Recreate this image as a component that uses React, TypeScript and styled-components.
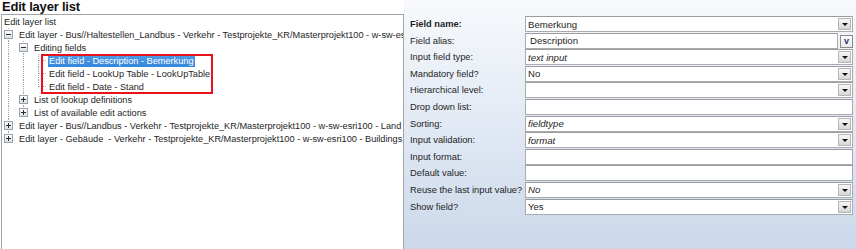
import React from "react";
import styled, { createGlobalStyle } from "styled-components";

const GlobalStyle = createGlobalStyle`
  html, body {
    margin: 0;
    padding: 0;
    background: #ffffff;
  }
  body {
    width: 856px;
    height: 249px;
    overflow: hidden;
    font-family: "Liberation Sans", Arial, sans-serif;
    color: #1e1e1e;
  }
`;

type Guide = "full" | "top" | "none";
type Expander = "plus" | "minus" | null;

type CellSpec = {
  line: Guide;
  tick?: boolean;
  expander?: Expander;
};

type TreeNode = {
  text: string;
  cells: CellSpec[];
  selected?: boolean;
};

const head: TreeNode[] = [
  { text: "Edit layer list", cells: [] },
  {
    text: "Edit layer - Bus//Haltestellen_Landbus - Verkehr - Testprojekte_KR/Masterprojekt100 - w-sw-esri100 - Haltestellen",
    cells: [{ line: "full", expander: "minus" }],
  },
  {
    text: "Editing fields",
    cells: [{ line: "full" }, { line: "full", expander: "minus" }],
  },
];

const marked: TreeNode[] = [
  {
    text: "Edit field - Description - Bemerkung",
    cells: [{ line: "full" }, { line: "full" }, { line: "full", tick: true }],
    selected: true,
  },
  {
    text: "Edit field - LookUp Table - LookUpTable",
    cells: [{ line: "full" }, { line: "full" }, { line: "full", tick: true }],
  },
  {
    text: "Edit field - Date - Stand",
    cells: [{ line: "full" }, { line: "full" }, { line: "top", tick: true }],
  },
];

const tail: TreeNode[] = [
  {
    text: "List of lookup definitions",
    cells: [{ line: "full" }, { line: "full", expander: "plus" }],
  },
  {
    text: "List of available edit actions",
    cells: [{ line: "full" }, { line: "top", expander: "plus" }],
  },
  {
    text: "Edit layer - Bus//Landbus - Verkehr - Testprojekte_KR/Masterprojekt100 - w-sw-esri100 - Land bus",
    cells: [{ line: "full", expander: "plus" }],
  },
  {
    text: "Edit layer - Gebäude  - Verkehr - Testprojekte_KR/Masterprojekt100 - w-sw-esri100 - Buildings",
    cells: [{ line: "top", expander: "plus" }],
  },
];

type Field = {
  label: string;
  value?: string;
  bold?: boolean;
  italic?: boolean;
  kind: "combo" | "alias" | "text";
};

const fields: Field[] = [
  { label: "Field name:", value: "Bemerkung", bold: true, kind: "combo" },
  { label: "Field alias:", value: "Description", kind: "alias" },
  { label: "Input field type:", value: "text input", italic: true, kind: "combo" },
  { label: "Mandatory field?", value: "No", kind: "combo" },
  { label: "Hierarchical level:", kind: "combo" },
  { label: "Drop down list:", kind: "text" },
  { label: "Sorting:", value: "fieldtype", italic: true, kind: "combo" },
  { label: "Input validation:", value: "format", italic: true, kind: "combo" },
  { label: "Input format:", kind: "text" },
  { label: "Default value:", kind: "text" },
  { label: "Reuse the last input value?", value: "No", italic: true, kind: "combo" },
  { label: "Show field?", value: "Yes", kind: "combo" },
];

const Page = styled.div`
  display: grid;
  grid-template-columns: 404px 452px;
  height: 249px;
`;

const LeftColumn = styled.div`
  display: flex;
  flex-direction: column;
  min-width: 0;
`;

const Title = styled.h1`
  margin: 0;
  height: 14px;
  padding-left: 2px;
  font-size: 13px;
  line-height: 14px;
  font-weight: bold;
  letter-spacing: -0.2px;
  color: #111;
`;

const TreeBox = styled.div`
  flex: 1;
  margin-left: 1px;
  border: 1px solid #a3a3a3;
  border-bottom: none;
  background: #fff;
  padding: 0 0 0 1px;
  overflow: hidden;
`;

const Row = styled.div`
  display: flex;
  align-items: center;
  height: 13px;
  white-space: pre;
`;

const Cell = styled.div<{ $line: Guide; $tick?: boolean }>`
  flex: none;
  width: 15px;
  height: 13px;
  display: flex;
  align-items: center;
  background-repeat: no-repeat;
  background-image: ${({ $line, $tick }) =>
    [
      $line !== "none"
        ? "repeating-linear-gradient(to bottom, #a5a5a5 0 1px, transparent 1px 2px)"
        : null,
      $tick
        ? "repeating-linear-gradient(to right, #a5a5a5 0 1px, transparent 1px 2px)"
        : null,
    ]
      .filter(Boolean)
      .join(", ") || "none"};
  background-size: ${({ $line, $tick }) =>
    [
      $line !== "none" ? `1px ${$line === "top" ? "7px" : "13px"}` : null,
      $tick ? "8px 1px" : null,
    ]
      .filter(Boolean)
      .join(", ") || "auto"};
  background-position: ${({ $line, $tick }) =>
    [$line !== "none" ? "5px 0" : null, $tick ? "6px 6px" : null]
      .filter(Boolean)
      .join(", ") || "0 0"};
`;

const ExpanderBox = styled.span`
  box-sizing: border-box;
  width: 9px;
  height: 9px;
  margin-left: 1px;
  border: 1px solid #97a2ad;
  background: linear-gradient(#ffffff, #dcdfe3);
  display: flex;
  align-items: center;
  justify-content: center;
  position: relative;
  &::before {
    content: "";
    width: 5px;
    height: 1px;
    background: #2b2b2b;
  }
`;

const PlusBar = styled.span`
  position: absolute;
  left: 3px;
  top: 1px;
  width: 1px;
  height: 5px;
  background: #2b2b2b;
`;

const Label = styled.span<{ $selected?: boolean }>`
  flex: none;
  font-size: 9.2px;
  line-height: 12px;
  height: 12px;
  padding: 0 1px;
  color: ${({ $selected }) => ($selected ? "#fff" : "#1e1e1e")};
  background: ${({ $selected }) =>
    $selected ? "linear-gradient(#4d9be9, #3585dc)" : "transparent"};
`;

const Marked = styled.div`
  position: relative;
  &::after {
    content: "";
    position: absolute;
    left: 38px;
    top: 0;
    width: 172px;
    height: 40px;
    box-sizing: border-box;
    border: 2px solid #e8121a;
    pointer-events: none;
  }
`;

const Settings = styled.div`
  padding: 16px 3px 0 6px;
  background: linear-gradient(to bottom, #f7f9fc 0%, #e4ebf5 45%, #cbd8ea 100%);
  display: grid;
  grid-template-columns: 115px 328px;
  grid-auto-rows: 16.6px;
  align-content: start;
`;

const FieldLabel = styled.div<{ $bold?: boolean }>`
  font-size: 9.3px;
  font-weight: ${({ $bold }) => ($bold ? "bold" : "normal")};
  line-height: 16px;
  height: 16px;
  white-space: nowrap;
  color: #1e1e1e;
`;

const InputRow = styled.div`
  display: flex;
  align-items: stretch;
  gap: 2px;
  height: 16px;
`;

const Input = styled.div<{ $italic?: boolean; $inset?: number }>`
  flex: 1;
  box-sizing: border-box;
  display: flex;
  align-items: center;
  border: 1px solid #a9abaf;
  border-top-color: #9a9ca0;
  background: #fff;
  padding-left: ${({ $inset }) => $inset ?? 2}px;
  font-size: 9.6px;
  font-style: ${({ $italic }) => ($italic ? "italic" : "normal")};
  color: #1e1e1e;
  white-space: nowrap;
  overflow: hidden;
`;

const Value = styled.span`
  flex: 1;
`;

const DropButton = styled.span`
  flex: none;
  box-sizing: border-box;
  width: 13px;
  height: 12px;
  margin: 1px;
  border: 1px solid #b6b6b6;
  background: linear-gradient(#f7f7f7, #d6d6d6);
  display: flex;
  align-items: center;
  justify-content: center;
  &::before {
    content: "";
    border-left: 3px solid transparent;
    border-right: 3px solid transparent;
    border-top: 3px solid #111;
    margin-top: 1px;
  }
`;

const AliasButton = styled.span`
  flex: none;
  box-sizing: border-box;
  width: 13px;
  height: 13px;
  margin-top: 2px;
  border: 1px solid #8a8a8a;
  background: linear-gradient(#ffffff, #e9e9e9);
  display: flex;
  align-items: center;
  justify-content: center;
  font-size: 9px;
  font-weight: bold;
  line-height: 9px;
  color: #1d2f6b;
`;

const TreeLine = ({ node }: { node: TreeNode }) => (
  <Row>
    {node.cells.map((c, i) => (
      <Cell key={i} $line={c.line} $tick={c.tick}>
        {c.expander && (
          <ExpanderBox>{c.expander === "plus" && <PlusBar />}</ExpanderBox>
        )}
      </Cell>
    ))}
    <Label $selected={node.selected}>{node.text}</Label>
  </Row>
);

const FieldRow = ({ field }: { field: Field }) => (
  <>
    <FieldLabel $bold={field.bold}>{field.label}</FieldLabel>
    <InputRow>
      <Input $italic={field.italic} $inset={field.kind === "alias" ? 4 : 2}>
        <Value>{field.value}</Value>
        {field.kind === "combo" && <DropButton />}
      </Input>
      {field.kind === "alias" && <AliasButton>v</AliasButton>}
    </InputRow>
  </>
);

export default function App() {
  return (
    <>
      <GlobalStyle />
      <Page>
        <LeftColumn>
          <Title>Edit layer list</Title>
          <TreeBox>
            {head.map((n) => (
              <TreeLine key={n.text} node={n} />
            ))}
            <Marked>
              {marked.map((n) => (
                <TreeLine key={n.text} node={n} />
              ))}
            </Marked>
            {tail.map((n) => (
              <TreeLine key={n.text} node={n} />
            ))}
          </TreeBox>
        </LeftColumn>
        <Settings>
          {fields.map((f) => (
            <FieldRow key={f.label} field={f} />
          ))}
        </Settings>
      </Page>
    </>
  );
}
